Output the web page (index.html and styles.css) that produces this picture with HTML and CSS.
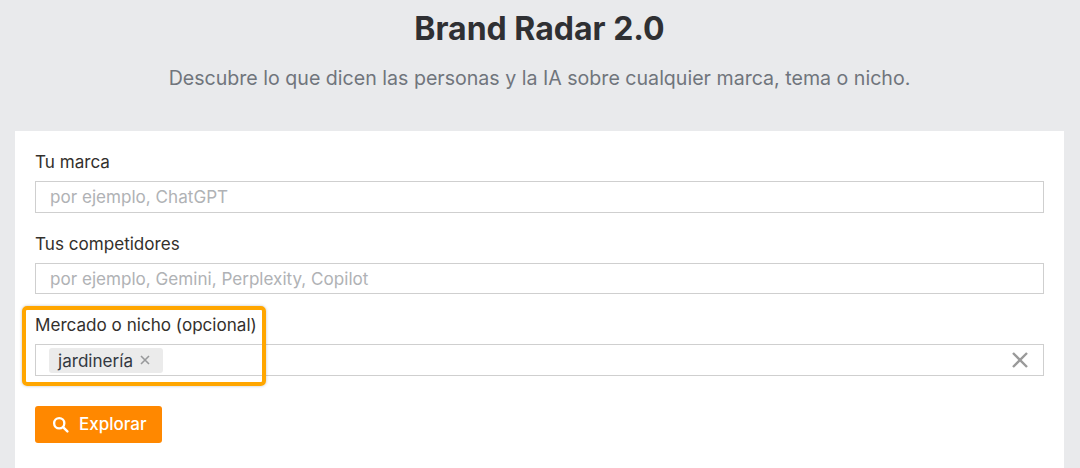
FILE: index.html
```html
<!DOCTYPE html>
<html lang="es">
<head>
    <meta charset="UTF-8">
    <meta name="viewport" content="width=device-width, initial-scale=1.0">
    <title>Brand Radar 2.0</title>
    <link rel="stylesheet" href="styles.css">
</head>
<body>
    <header class="cabecera">
        <h1>Brand Radar 2.0</h1>
        <p>Descubre lo que dicen las personas y la IA sobre cualquier marca, tema o nicho.</p>
    </header>

    <main class="tarjeta">
        <div class="campo">
            <label>Tu marca</label>
            <div class="entrada entrada-alta"><span class="placeholder">por ejemplo, ChatGPT</span></div>
        </div>
        <div class="campo">
            <label>Tus competidores</label>
            <div class="entrada entrada-baja"><span class="placeholder">por ejemplo, Gemini, Perplexity, Copilot</span></div>
        </div>
        <div class="campo campo-nicho">
            <div class="resaltado"></div>
            <label>Mercado o nicho (opcional)</label>
            <div class="entrada entrada-tags">
                <span class="tag">jardinería
                    <svg class="tag-x" viewBox="0 0 10 10" width="10" height="10"><path d="M1 1 9 9M9 1 1 9"/></svg>
                </span>
                <svg class="limpiar" viewBox="0 0 16 16" width="16" height="16"><path d="M1 1 15 15M15 1 1 15"/></svg>
            </div>
        </div>
        <button class="explorar">
            <svg viewBox="0 0 16 16" width="17" height="17"><circle cx="6.8" cy="6.8" r="4.8"/><path d="M10.4 10.4 14.5 14.5"/></svg>
            <span class="explorar-texto">Explorar</span>
        </button>
    </main>
</body>
</html>
```

FILE: styles.css
```css
body {
    font-family: Inter, "Liberation Sans", sans-serif;
    background-color: #e9eaec;
    margin: 0;
    padding: 0 16px 0 15px;
    height: 468px;
    overflow: hidden;
    box-sizing: border-box;
}

.cabecera {
    text-align: center;
    height: 131px;
    padding-top: 8px;
    box-sizing: border-box;
}

.cabecera h1 {
    margin: 0;
    font-size: 32px;
    line-height: 42px;
    font-weight: 700;
    color: #2f3033;
}

.cabecera p {
    margin: 14px 0 0;
    font-size: 19.6px;
    line-height: 28px;
    color: #70757c;
}

.tarjeta {
    background-color: white;
    padding: 20px 20px 0;
    height: 337px;
    box-sizing: border-box;
}

.campo {
    margin-bottom: 20px;
    position: relative;
}

.campo label {
    display: block;
    font-size: 17.1px;
    line-height: 22px;
    color: #33302c;
    margin-bottom: 8px;
}

.entrada {
    height: 32px;
    border: 1px solid #cfcfcf;
    box-sizing: border-box;
    padding: 0 14px;
    display: flex;
    align-items: center;
    font-size: 17.1px;
}

.entrada-alta {
    padding-bottom: 2px;
}

.entrada-baja {
    height: 31px;
}

.placeholder {
    color: #b0b2b5;
}

.campo-nicho {
    margin-bottom: 30px;
}

.entrada-tags {
    justify-content: space-between;
    padding: 0 15px 0 13px;
}

.tag {
    display: flex;
    align-items: center;
    gap: 7px;
    height: 25px;
    padding: 0 13px 0 9px;
    background-color: #ebebeb;
    border-radius: 3px;
    color: #33383f;
}

.tag-x path {
    fill: none;
    stroke: #98999b;
    stroke-width: 1.6;
}

.limpiar path {
    fill: none;
    stroke: #9a9a9a;
    stroke-width: 2.4;
}

/* recuadro naranja sobre el campo */
.resaltado {
    position: absolute;
    left: -13px;
    top: -8px;
    width: 244px;
    height: 80px;
    border: 4px solid #ffa600;
    border-radius: 5px;
    box-sizing: border-box;
    box-shadow: 0 0 3px rgba(0,0,0,0.25);
}

.explorar {
    display: flex;
    align-items: center;
    gap: 10px;
    height: 37px;
    width: 127px;
    padding: 0 0 0 17px;
    background-color: #ff8800;
    color: white;
    border: none;
    border-radius: 3px;
    font-family: inherit;
    font-size: 17px;
    font-weight: 500;
}

.explorar-texto {
    margin-bottom: 1px;
}

.explorar circle,
.explorar path {
    fill: none;
    stroke: white;
    stroke-width: 2.2;
    stroke-linecap: round;
}
```
